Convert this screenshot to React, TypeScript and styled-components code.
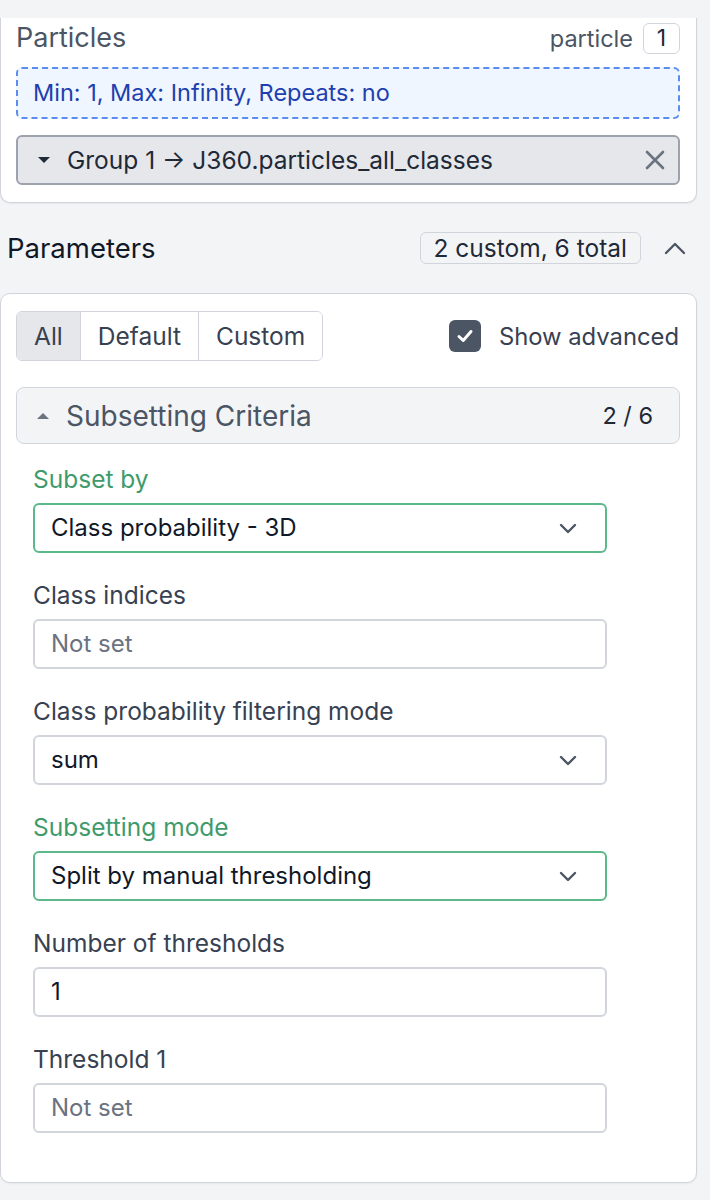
import React, { useState } from "react";
import styled, { createGlobalStyle } from "styled-components";

const GlobalStyle = createGlobalStyle`
    body {
        margin: 0;
        background: #f3f4f6;
        font-family: Inter, "Noto Sans", "Liberation Sans", sans-serif;
        color: #1f2937;
    }
`;

const Page = styled.div`
    width: 697px;
    padding-top: 18px;
    padding-bottom: 18px;
`;

const ParticlesCard = styled.section`
    background: #fff;
    border: 1px solid #d1d5db;
    border-top: none;
    border-radius: 0 0 10px 10px;
    box-shadow: 0 1px 2px rgba(0, 0, 0, 0.06);
    padding: 0 16px 17px 15px;
`;

const CardHeader = styled.div`
    display: flex;
    align-items: center;
    justify-content: space-between;
    height: 40px;
    margin-bottom: 9px;
`;

const CardTitle = styled.h2`
    margin: 0;
    font-size: 27px;
    line-height: 32px;
    font-weight: 400;
    color: #4b5563;
`;

const CountWrap = styled.div`
    display: flex;
    align-items: center;
    gap: 10px;
    font-size: 23.5px;
    color: #4b5563;
`;

const CountBox = styled.span`
    display: inline-flex;
    align-items: center;
    justify-content: center;
    width: 35px;
    height: 29px;
    border: 1px solid #d1d5db;
    border-radius: 6px;
    color: #1f2937;
    font-size: 23px;
`;

const DropZone = styled.div`
    height: 52px;
    box-sizing: border-box;
    border: 2px dashed #5b8def;
    border-radius: 6px;
    background: #eff6ff;
    display: flex;
    align-items: center;
    padding-left: 15px;
    font-size: 23.5px;
    line-height: 28px;
    color: #1e40af;
    margin-bottom: 16px;
`;

const GroupRow = styled.div`
    height: 50px;
    box-sizing: border-box;
    border: 2px solid #9ca3af;
    border-radius: 6px;
    background: #e5e7eb;
    display: flex;
    align-items: center;
    padding: 0 12px 0 19px;
    font-size: 24.5px;
    line-height: 28px;
    color: #1f2937;
`;

const GroupText = styled.span`
    flex: 1;
    margin-left: 16px;
`;

const IconButton = styled.button`
    border: none;
    background: none;
    padding: 0;
    display: flex;
    align-items: center;
    cursor: pointer;
`;

const SectionHeader = styled.div`
    display: flex;
    align-items: center;
    height: 32px;
    margin: 29px 11px 29px 7px;
`;

const SectionTitle = styled.h2`
    margin: 0;
    flex: 1;
    font-size: 27.5px;
    line-height: 32px;
    font-weight: 400;
    color: #111827;
`;

const Badge = styled.span`
    height: 32px;
    box-sizing: border-box;
    display: inline-flex;
    align-items: center;
    padding: 0 13px;
    border: 1px solid #d1d5db;
    border-radius: 6px;
    font-size: 24.5px;
    color: #1f2937;
    margin-right: 23px;
`;

const ParamsCard = styled.section`
    background: #fff;
    border: 1px solid #d1d5db;
    border-radius: 10px;
    box-shadow: 0 1px 2px rgba(0, 0, 0, 0.06);
    padding: 17px 16px 18px 15px;
`;

const Toolbar = styled.div`
    display: flex;
    align-items: center;
    justify-content: space-between;
    margin-bottom: 26px;
`;

const Segmented = styled.div`
    display: flex;
    height: 50px;
    box-sizing: border-box;
    border: 1px solid #d1d5db;
    border-radius: 6px;
    overflow: hidden;
`;

const Segment = styled.button<{ active?: boolean }>`
    border: none;
    border-left: 1px solid #d1d5db;
    background: ${p => (p.active ? "#e5e7eb" : "#fff")};
    font-family: inherit;
    font-size: 24.5px;
    color: #374151;
    padding: 0 17px;
    cursor: pointer;

    &:first-child {
        border-left: none;
    }
`;

const CheckLabel = styled.label`
    display: flex;
    align-items: center;
    gap: 18px;
    font-size: 23.8px;
    color: #374151;
    margin-right: 1px;
`;

const CheckBox = styled.span`
    width: 32px;
    height: 32px;
    border-radius: 6px;
    background: #4b5563;
    display: inline-flex;
    align-items: center;
    justify-content: center;
`;

const GroupHeader = styled.div`
    height: 57px;
    box-sizing: border-box;
    border: 1px solid #d1d5db;
    border-radius: 8px;
    background: #f3f4f6;
    display: flex;
    align-items: center;
    padding: 0 26px 0 19px;
    margin-bottom: 23px;
`;

const GroupTitle = styled.span`
    flex: 1;
    margin-left: 16px;
    font-size: 28px;
    line-height: 32px;
    color: #4b5563;
`;

const GroupCount = styled.span`
    font-size: 23.5px;
    color: #1f2937;
`;

const Fields = styled.div`
    padding-left: 17px;
    width: 574px;
`;

const Field = styled.div`
    margin-bottom: 30px;

    &:last-child {
        margin-bottom: 31px;
    }
`;

const Label = styled.div<{ custom?: boolean }>`
    font-size: 24.5px;
    line-height: 24px;
    color: ${p => (p.custom ? "#3f9b6b" : "#374151")};
    margin-bottom: 12px;
`;

const InputBox = styled.div<{ custom?: boolean }>`
    height: 50px;
    box-sizing: border-box;
    border: 2px solid ${p => (p.custom ? "#5bb98a" : "#d1d5db")};
    border-radius: 6px;
    background: #fff;
    display: flex;
    align-items: center;
    padding: 0 26px 0 16px;
    font-size: 24px;
    line-height: 28px;
`;

const Value = styled.span<{ placeholder?: boolean }>`
    flex: 1;
    color: ${p => (p.placeholder ? "#6b7280" : "#111827")};
`;

const Caret = ({ up }: { up?: boolean }) => (
    <svg width="14" height="10" viewBox="0 0 14 10">
        <path d={up ? "M1 8 L7 2 L13 8 Z" : "M1 2 L7 8 L13 2 Z"} fill={up ? "#6b7280" : "#1f2937"} />
    </svg>
);

const Chevron = ({ up }: { up?: boolean }) => (
    <svg width="22" height="14" viewBox="0 0 22 14" fill="none">
        <path
            d={up ? "M2 12 L11 3 L20 12" : "M4 4 L11 11 L18 4"}
            stroke="#4b5563"
            strokeWidth="2.4"
            strokeLinecap="round"
            strokeLinejoin="round"
        />
    </svg>
);

const CloseIcon = () => (
    <svg width="22" height="22" viewBox="0 0 22 22" fill="none">
        <path d="M3 3 L19 19 M19 3 L3 19" stroke="#6b7280" strokeWidth="2.6" strokeLinecap="round" />
    </svg>
);

const CheckIcon = () => (
    <svg width="20" height="20" viewBox="0 0 20 20" fill="none">
        <path d="M4 10.5 L8.2 14.5 L16 5.5" stroke="#fff" strokeWidth="3" strokeLinecap="round" strokeLinejoin="round" />
    </svg>
);

type FieldDef = {
    label: string;
    value: string;
    custom?: boolean;
    select?: boolean;
    empty?: boolean;
};

const fields: FieldDef[] = [
    { label: "Subset by", value: "Class probability - 3D", custom: true, select: true },
    { label: "Class indices", value: "Not set", empty: true },
    { label: "Class probability filtering mode", value: "sum", select: true },
    { label: "Subsetting mode", value: "Split by manual thresholding", custom: true, select: true },
    { label: "Number of thresholds", value: "1" },
    { label: "Threshold 1", value: "Not set", empty: true },
];

const App: React.FC = () => {
    const [filter, setFilter] = useState<string>("All");

    return (
        <>
            <GlobalStyle />
            <Page>
                <ParticlesCard>
                    <CardHeader>
                        <CardTitle>Particles</CardTitle>
                        <CountWrap>
                            particle <CountBox>1</CountBox>
                        </CountWrap>
                    </CardHeader>
                    <DropZone>Min: 1, Max: Infinity, Repeats: no</DropZone>
                    <GroupRow>
                        <Caret />
                        <GroupText>Group 1 → J360.particles_all_classes</GroupText>
                        <IconButton><CloseIcon /></IconButton>
                    </GroupRow>
                </ParticlesCard>

                <SectionHeader>
                    <SectionTitle>Parameters</SectionTitle>
                    <Badge>2 custom, 6 total</Badge>
                    <IconButton><Chevron up /></IconButton>
                </SectionHeader>

                <ParamsCard>
                    <Toolbar>
                        <Segmented>
                            {["All", "Default", "Custom"].map(s => (
                                <Segment key={s} active={filter === s} onClick={() => setFilter(s)}>{s}</Segment>
                            ))}
                        </Segmented>
                        <CheckLabel>
                            <CheckBox><CheckIcon /></CheckBox>
                            Show advanced
                        </CheckLabel>
                    </Toolbar>

                    <GroupHeader>
                        <Caret up />
                        <GroupTitle>Subsetting Criteria</GroupTitle>
                        <GroupCount>2 / 6</GroupCount>
                    </GroupHeader>

                    <Fields>
                        {fields.map(f => (
                            <Field key={f.label}>
                                <Label custom={f.custom}>{f.label}</Label>
                                <InputBox custom={f.custom}>
                                    <Value placeholder={f.empty}>{f.value}</Value>
                                    {f.select && <Chevron />}
                                </InputBox>
                            </Field>
                        ))}
                    </Fields>
                </ParamsCard>
            </Page>
        </>
    );
};

export default App;
